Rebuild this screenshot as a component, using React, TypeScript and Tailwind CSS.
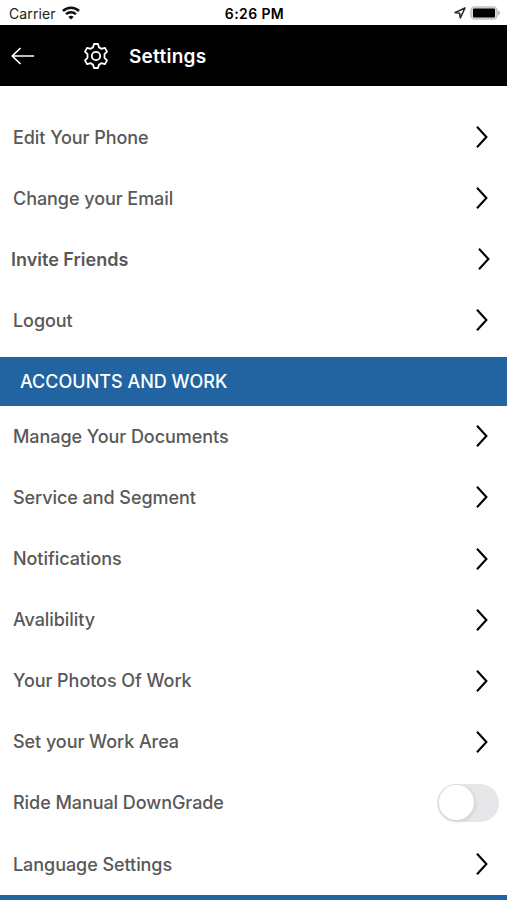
import React, { useState } from 'react';

interface RowItem {
  label: string;
  type?: 'link' | 'toggle';
  emphasized?: boolean;
}

const profileItems: RowItem[] = [
  { label: 'Edit Your Phone' },
  { label: 'Change your Email' },
  { label: 'Invite Friends', emphasized: true },
  { label: 'Logout' },
];

const workItems: RowItem[] = [
  { label: 'Manage Your Documents' },
  { label: 'Service and Segment' },
  { label: 'Notifications' },
  { label: 'Avalibility' },
  { label: 'Your Photos Of Work' },
  { label: 'Set your Work Area' },
  { label: 'Ride Manual DownGrade', type: 'toggle' },
  { label: 'Language Settings' },
];

const WifiIcon = () => (
  <svg width="18" height="14" viewBox="0 0 18 14" fill="none" stroke="#111" strokeWidth="2.5">
    <path d="M1 5C5.4 .7 12.6 .7 17 5" />
    <path d="M4 8.2c2.8-2.6 7.2-2.6 10 0" />
    <path d="M9 13.6 6.3 10.9c1.5-1.4 3.9-1.4 5.4 0z" fill="#111" stroke="none" />
  </svg>
);

const LocationIcon = () => (
  <svg width="12" height="12" viewBox="0 0 12 12" fill="none" stroke="#222" strokeWidth="1.5" strokeLinejoin="round">
    <path d="M11 1 1 5.6l4.7.6.6 4.8z" />
  </svg>
);

const BatteryIcon = () => (
  <svg width="30" height="14" viewBox="0 0 30 14">
    <rect x="1" y="1" width="26" height="12" rx="3.6" fill="#ddd" stroke="#c4c4c4" strokeWidth="1.6" />
    <rect x="3" y="2.5" width="22" height="9" rx="1" fill="#000" />
    <path d="M28.2 4.6c2.2.7 2.2 4.1 0 4.8z" fill="#aaa" />
  </svg>
);

const BackIcon = () => (
  <svg width="24" height="20" viewBox="0 0 24 20" fill="none" stroke="#fff" strokeWidth="1.7">
    <path d="M23 10H1.5M9.5 2 1.3 10l8.2 8" />
  </svg>
);

const GearIcon = () => (
  <svg width="26" height="26" viewBox="0 0 26 26" fill="none" stroke="#fff" strokeWidth="1.8" strokeLinejoin="round">
    <path d="M11 1h4l1 3.4 2.4 1.4 3.4-1 2.2 3.8-2.5 2.5v3.8l2.5 2.5-2.2 3.8-3.4-1-2.4 1.4-1 3.4h-4l-1-3.4-2.4-1.4-3.4 1L2 17.4l2.5-2.500v-3.800L2 8.600l2.200-3.800 3.400 1L10 4.400z" />
    <circle cx="13" cy="13" r="4.2" />
  </svg>
);

const ChevronIcon = () => (
  <svg width="14" height="24" viewBox="0 0 14 24" fill="none" stroke="#000" strokeWidth="2.1">
    <path d="M2 1.8 11.400 12 2 22.200" />
  </svg>
);

const Toggle = () => {
  const [on, setOn] = useState(false);

  return (
    <button
      type="button"
      role="switch"
      aria-checked={on}
      aria-label="Ride Manual DownGrade"
      onClick={() => setOn(!on)}
      className={`flex h-[38px] w-[62px] items-center rounded-full p-[1.5px] ${on ? 'justify-end bg-[#34c759]' : 'justify-start bg-[#e7e7e9]'}`}
    >
      <span className="size-[35px] rounded-full bg-white shadow-[1px_1px_4px_rgba(0,0,0,0.12)]" />
    </button>
  );
};

const SettingsRow: React.FC<RowItem> = ({ label, type = 'link', emphasized }) => (
  <li
    className={`flex h-[61.1px] items-center justify-between ${
      emphasized ? 'pl-[11px] pr-[16px]' : type === 'toggle' ? 'pl-[13px] pr-[8px]' : 'pl-[13px] pr-[18px]'
    }`}
  >
    <span className={`text-[18px] ${emphasized ? 'font-semibold' : 'font-medium tracking-[-0.06px]'}`}>{label}</span>
    {type === 'toggle' ? <Toggle /> : <ChevronIcon />}
  </li>
);

export default function App() {
  return (
    <div className="h-[900px] w-[507px] overflow-hidden bg-white font-['Inter',sans-serif] text-[#585858]">
      <div className="grid h-[25px] grid-cols-3 items-center pl-[9px] pr-[7px] pt-px text-[14px] text-[#222]">
        <div className="flex items-center gap-[6px]">
          <span className="tracking-[0.1px]">Carrier</span>
          <WifiIcon />
        </div>
        <span className="text-center font-semibold tracking-[0.4px] text-black">6:26 PM</span>
        <div className="flex items-center justify-end gap-[4px]">
          <LocationIcon />
          <BatteryIcon />
        </div>
      </div>

      <header className="flex h-[61px] items-center bg-black pl-[11px] text-white">
        <BackIcon />
        <div className="ml-[48px]">
          <GearIcon />
        </div>
        <h1 className="ml-[20px] pt-[3px] text-[19px] font-semibold tracking-[0.25px]">Settings</h1>
      </header>

      <ul className="h-[271px] pt-[20.5px]">
        {profileItems.map((item) => (
          <SettingsRow key={item.label} {...item} />
        ))}
      </ul>

      <h2 className="flex h-[48.8px] items-center bg-[#2164a1] pl-[20px] text-[18px] font-medium text-white">
        ACCOUNTS AND WORK
      </h2>
      <ul>
        {workItems.map((item) => (
          <SettingsRow key={item.label} {...item} />
        ))}
      </ul>
      <div className="h-[6px] bg-[#2164a1]" />
    </div>
  );
}
